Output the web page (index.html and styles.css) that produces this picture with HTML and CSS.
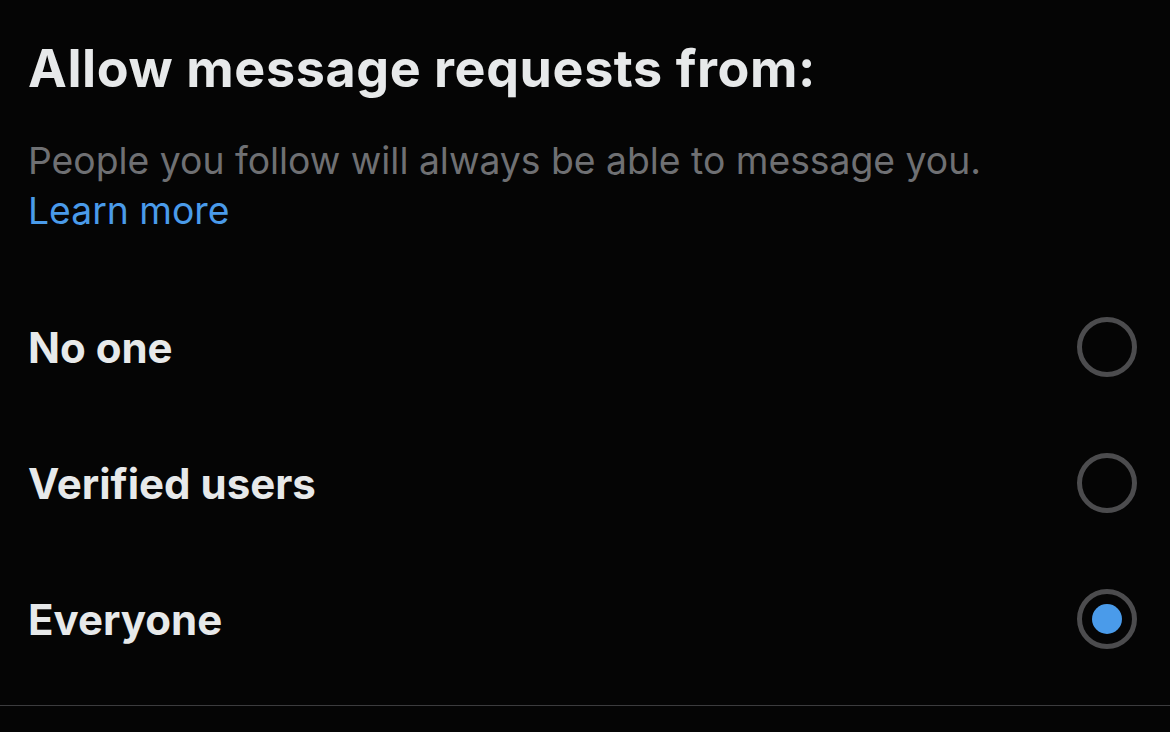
FILE: index.html
```html
<!DOCTYPE html>
<html>
<head>
<meta charset="utf-8">
<link rel="stylesheet" href="styles.css">
</head>
<body>
<main class="page">
  <h1 class="title">Allow message requests from:</h1>
  <p class="desc">People you follow will always be able to message you. <a class="link" href="#">Learn more</a></p>
  <ul class="options">
    <li class="option"><span class="label">No one</span><span class="radio"></span></li>
    <li class="option"><span class="label">Verified users</span><span class="radio"></span></li>
    <li class="option"><span class="label">Everyone</span><span class="radio checked"></span></li>
  </ul>
  <div class="divider"></div>
</main>
</body>
</html>
```
FILE: styles.css
```css
html, body {
  margin: 0;
  padding: 0;
  background: #050505;
  width: 1170px;
  height: 732px;
  overflow: hidden;
}
.page {
  font-family: Inter, "Open Sans", sans-serif;
  color: #e7e9ea;
  padding: 0 0 0 28px;
}
.title {
  margin: 0;
  padding-top: 36px;
  font-size: 52px;
  font-weight: 700;
  line-height: 66px;
  letter-spacing: 0.6px;
}
.desc {
  margin: 34px 0 0 0;
  font-size: 37.3px;
  line-height: 50px;
  color: #6f7073;
  width: 1000px;
}
.link {
  color: #4a9bea;
  text-decoration: none;
}
.options {
  list-style: none;
  margin: 43px 0 0 0;
  padding: 0;
}
.option {
  display: flex;
  align-items: center;
  justify-content: space-between;
  height: 136px;
  padding-right: 33px;
}
.label {
  font-size: 42px;
  font-weight: 700;
}
.radio {
  width: 50px;
  height: 50px;
  border: 5px solid #4c4c4e;
  border-radius: 50%;
  display: flex;
  align-items: center;
  justify-content: center;
}
.radio.checked::after {
  content: "";
  width: 30px;
  height: 30px;
  border-radius: 50%;
  background: #4a9bea;
}
.divider {
  height: 1px;
  background: #3c3c3e;
  margin-left: -28px;
  margin-top: 18px;
}
```
